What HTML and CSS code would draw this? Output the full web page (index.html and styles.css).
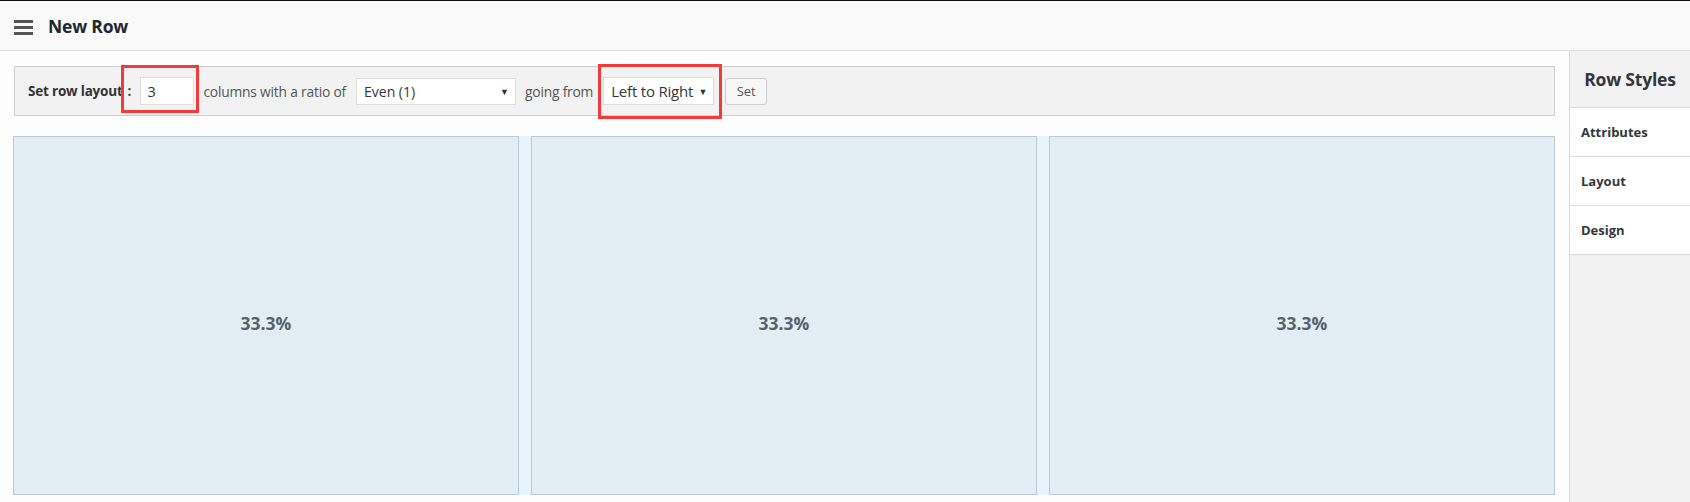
FILE: index.html
```html
<!DOCTYPE html>
<html>
<head>
<meta charset="utf-8">
<link rel="stylesheet" href="styles.css">
</head>
<body>
<header class="topbar">
  <svg class="menu-icon" width="20" height="15" viewBox="0 0 20 15"><rect x="0" y="0" width="19" height="3" fill="#555"/><rect x="0" y="6" width="19" height="3" fill="#555"/><rect x="0" y="12" width="19" height="3" fill="#555"/></svg>
  <h1 class="title">New Row</h1>
</header>
<div class="main">
  <section class="content">
    <div class="toolbar">
      <span class="lbl">Set row layout</span><span class="colon">:</span>
      <span class="field-wrap">
        <input class="num" type="text" value="3">
        <span class="mark mark-a"></span>
      </span>
      <span class="txt txt-cols">columns with a ratio of</span>
      <span class="select sel-ratio"><span>Even (1)</span><span class="arrow">▼</span></span>
      <span class="txt txt-from">going from</span>
      <span class="field-wrap">
        <span class="select sel-dir"><span>Left to Right</span><span class="arrow">▼</span></span>
        <span class="mark mark-b"></span>
      </span>
      <button class="btn">Set</button>
    </div>
    <div class="cols">
      <div class="col">33.3%</div>
      <div class="col">33.3%</div>
      <div class="col">33.3%</div>
    </div>
  </section>
  <aside class="sidebar">
    <div class="side-head">Row Styles</div>
    <div class="side-item">Attributes</div>
    <div class="side-item">Layout</div>
    <div class="side-item">Design</div>
  </aside>
</div>
</body>
</html>
```
FILE: styles.css
```css
* { box-sizing: border-box; }
html, body { margin: 0; padding: 0; }
body {
  width: 1690px;
  height: 502px;
  overflow: hidden;
  background: #fdfdfd;
  font-family: "Open Sans", "Noto Sans", sans-serif;
  color: #333;
}
.topbar {
  height: 51px;
  border-top: 1px solid #111;
  border-bottom: 1px solid #dcdcdc;
  background: #f9f9f9;
  display: flex;
  align-items: center;
  padding-left: 14px;
}
.menu-icon { display: block; margin-top: 3px; }
.title {
  margin: 0 0 0 14px;
  font-size: 17.5px;
  font-weight: 700;
  color: #23282d;
  letter-spacing: -0.2px;
}
.main {
  display: flex;
  height: 451px;
}
.content {
  width: 1569px;
  padding: 15px 14px 0 13px;
}
.toolbar {
  margin-left: 1px;
  height: 50px;
  border: 1px solid #cfcfcf;
  background: #f2f2f2;
  display: flex;
  align-items: center;
  padding-left: 13px;
  font-size: 13.8px;
}
.lbl { font-weight: 700; color: #333; letter-spacing: -0.2px; font-size: 13.5px; }
.colon { font-weight: 700; margin-left: 5px; margin-right: 9px; color: #444; font-size: 13.5px; }
.field-wrap { position: relative; display: inline-flex; }
.num {
  width: 54px;
  height: 28px;
  border: 1px solid #ddd;
  background: #fff;
  font-family: inherit;
  font-size: 14.5px;
  padding: 0 6px;
  color: #333;
  outline: none;
}
.txt { color: #555; letter-spacing: -0.2px; }
.txt-cols { margin: 0 10px 0 9px; }
.txt-from { margin: 0 10px 0 9px; }
.select {
  display: inline-flex;
  align-items: center;
  justify-content: space-between;
  height: 27px;
  background: #fff;
  border: 1px solid #ddd;
  padding: 0 6px 0 7px;
  color: #32373c;
  font-size: 14px;
}
.sel-ratio { width: 160px; }
.sel-dir { width: 111px; height: 28px; font-size: 15px; letter-spacing: -0.2px; }
.arrow { font-size: 9px; color: #333; }
.btn {
  margin-left: 11px;
  width: 42px;
  height: 27px;
  border: 1px solid #ccc;
  border-radius: 3px;
  background: #f7f7f7;
  font-family: inherit;
  font-size: 13px;
  color: #555;
  padding: 0;
}
.mark {
  position: absolute;
  border: 3px solid #f43b3b;
  pointer-events: none;
}
.mark-a { left: -19px; top: -12px; width: 78px; height: 48px; }
.mark-b { left: -5px; top: -13px; width: 124px; height: 55px; }
.cols {
  margin-top: 20px;
  height: 359px;
  background: #e5f4fb;
  display: flex;
  gap: 12px;
}
.col {
  flex: 1;
  background: #e2eef4;
  border: 1px solid #b9cad4;
  display: flex;
  align-items: center;
  justify-content: center;
  padding-top: 14px;
  font-size: 17.5px;
  font-weight: 700;
  color: #56616b;
}
.sidebar {
  width: 121px;
  border-left: 1px solid #dcdcdc;
  background: #f2f2f2;
}
.side-head {
  height: 57px;
  border-bottom: 1px solid #dcdcdc;
  display: flex;
  align-items: center;
  justify-content: center;
  font-size: 17.5px;
  font-weight: 700;
  color: #32373c;
  letter-spacing: -0.2px;
}
.side-item {
  height: 49px;
  border-bottom: 1px solid #dcdcdc;
  background: #fff;
  display: flex;
  align-items: center;
  padding-left: 11px;
  font-size: 13px;
  font-weight: 700;
  color: #32373c;
}
```
